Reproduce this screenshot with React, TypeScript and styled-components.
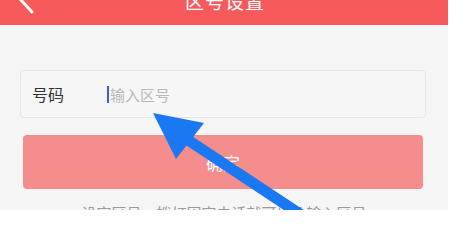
import React from "react";
import styled, { createGlobalStyle } from "styled-components";

const GlobalStyle = createGlobalStyle`
  html, body {
    margin: 0;
    padding: 0;
    background: #ffffff;
  }
  body {
    font-family: "Noto Sans CJK SC", "Noto Sans", sans-serif;
  }
`;

const Screen = styled.div`
  position: relative;
  width: 448px;
  height: 210px;
  overflow: hidden;
  background: #f5f5f5;
  display: flex;
  flex-direction: column;
`;

const Header = styled.div`
  position: relative;
  height: 25px;
  flex-shrink: 0;
  background: #f75a5b;
  display: flex;
  align-items: flex-end;
  justify-content: center;
  padding-bottom: 13px;
  box-sizing: border-box;
  overflow: hidden;
`;

const Back = styled.svg`
  position: absolute;
  left: 14px;
  top: -10px;
`;

const Title = styled.div`
  color: #ffffff;
  font-size: 19px;
  line-height: 22px;
  letter-spacing: 1px;
  margin-left: 2px;
`;

const Body = styled.div`
  display: flex;
  flex-direction: column;
  padding-top: 45px;
`;

const Field = styled.div`
  margin: 0 22px 0 20px;
  height: 48px;
  box-sizing: border-box;
  border: 1px solid #e6e6e6;
  border-radius: 4px;
  background: #f6f6f6;
  display: flex;
  align-items: center;
  padding-left: 11px;
`;

const Label = styled.div`
  width: 75px;
  font-size: 16px;
  color: #333333;
`;

const Caret = styled.span`
  width: 2px;
  height: 17px;
  background: #3d5ce0;
  margin-right: 1px;
`;

const Placeholder = styled.span`
  font-size: 15px;
  color: #b9b9b9;
`;

const Submit = styled.div`
  margin: 17px 25px 0 23px;
  height: 54px;
  border-radius: 4px;
  background: #f58d8d;
  color: #ffffff;
  font-size: 17px;
  display: flex;
  align-items: center;
  justify-content: center;
`;

const Hint = styled.div`
  margin-top: 14px;
  text-align: center;
  font-size: 15px;
  line-height: 20px;
  color: #9a9a9a;
`;

const Pointer = styled.svg`
  position: absolute;
  left: 0;
  top: 0;
  pointer-events: none;
`;

export default function App() {
  return (
    <>
      <GlobalStyle />
      <Screen>
        <Header>
          <Back width="24" height="26" viewBox="0 0 24 26">
            <polyline
              points="18,0 7,10 18,22"
              fill="none"
              stroke="#ffffff"
              strokeWidth="3"
              strokeLinecap="round"
              strokeLinejoin="round"
            />
          </Back>
          <Title>区号设置</Title>
        </Header>
        <Body>
          <Field>
            <Label>号码</Label>
            <Caret />
            <Placeholder>输入区号</Placeholder>
          </Field>
          <Submit>确定</Submit>
          <Hint>设定区号，拨打固定电话就可以免输入区号</Hint>
        </Body>
        <Pointer width="448" height="210" viewBox="0 0 448 210">
          <line x1="188" y1="140" x2="312" y2="222" stroke="#1a78f2" strokeWidth="11" />
          <polygon points="153,113 204,123 176,159" fill="#1a78f2" />
        </Pointer>
      </Screen>
    </>
  );
}
